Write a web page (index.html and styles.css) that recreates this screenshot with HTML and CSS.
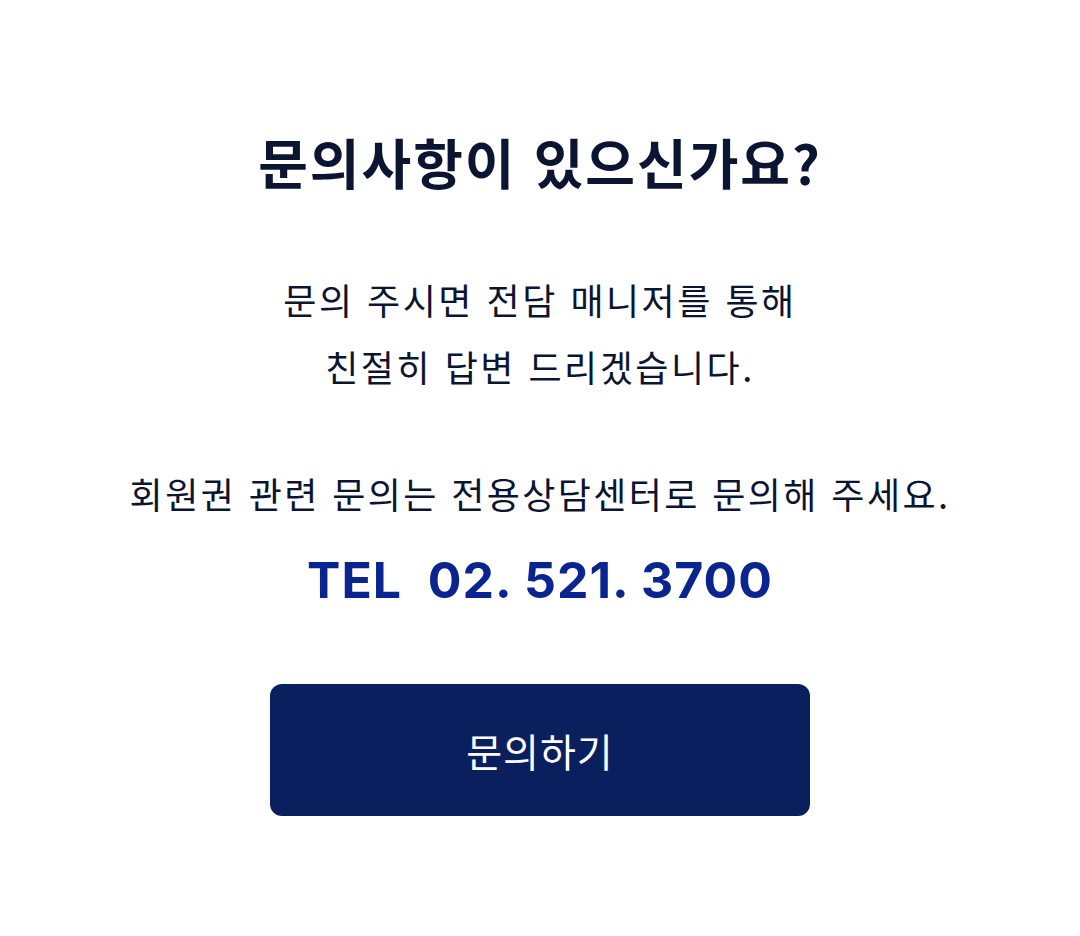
FILE: index.html
```html
<!DOCTYPE html>
<html lang="ko">
<head>
<meta charset="utf-8">
<link rel="stylesheet" href="styles.css">
</head>
<body>
<main class="contact">
  <h1 class="contact-title">문의사항이 있으신가요?</h1>
  <p class="contact-desc">문의 주시면 전담 매니저를 통해<br>친절히 답변 드리겠습니다.</p>
  <p class="contact-note">회원권 관련 문의는 전용상담센터로 문의해 주세요.</p>
  <p class="contact-tel">TEL&nbsp; 02. 521. 3700</p>
  <a class="contact-btn" href="#">문의하기</a>
</main>
</body>
</html>
```
FILE: styles.css
```css
html, body {
  margin: 0;
  padding: 0;
  background: #ffffff;
}
body {
  font-family: "Noto Sans CJK KR", "Noto Sans", sans-serif;
  color: #0b1430;
}
.contact {
  display: flex;
  flex-direction: column;
  align-items: center;
  text-align: center;
  padding-top: 126px;
}
.contact-title {
  margin: 0;
  font-size: 54px;
  font-weight: 700;
  line-height: 72px;
  letter-spacing: 2px;
}
.contact-desc {
  margin: 68px 0 0;
  font-size: 36px;
  line-height: 67px;
  font-weight: 400;
  letter-spacing: 2.5px;
}
.contact-note {
  margin: 60px 0 0;
  font-size: 36px;
  line-height: 67px;
  letter-spacing: 2.4px;
}
.contact-tel {
  margin: 23px 0 0;
  font-family: Inter, "Liberation Sans", sans-serif;
  font-weight: 700;
  font-size: 50px;
  line-height: 60px;
  color: #0a2590;
  letter-spacing: 1px;
  white-space: pre;
}
.contact-btn {
  margin-top: 74px;
  width: 540px;
  height: 132px;
  border-radius: 12px;
  background: #0a1f5e;
  color: #ffffff;
  display: flex;
  align-items: center;
  justify-content: center;
  font-size: 39px;
  letter-spacing: 1px;
  text-decoration: none;
}
```
